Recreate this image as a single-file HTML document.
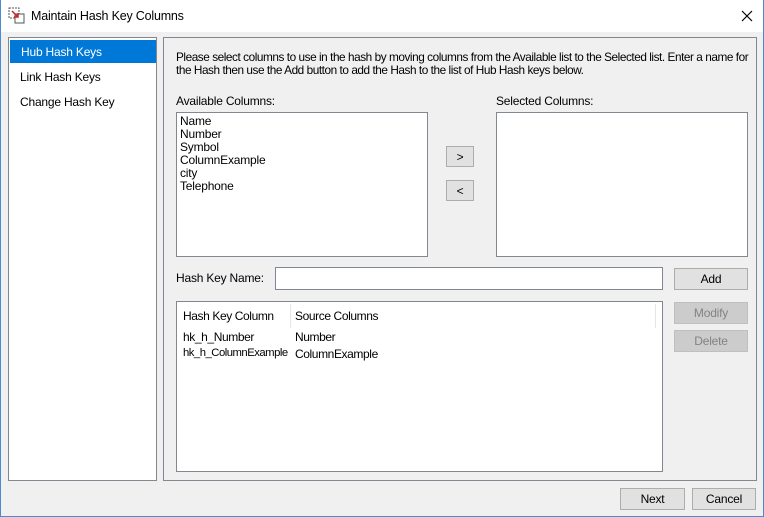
<!DOCTYPE html>
<html><head><style>
*{margin:0;padding:0;box-sizing:border-box}
body{width:764px;height:517px;background:#f0f0f0;font-family:"Liberation Sans",sans-serif;font-size:12px;letter-spacing:-0.2px;color:#000;position:relative;overflow:hidden}
.a{position:absolute}
.title{left:0;top:0;width:764px;height:32px;background:#fff}
.box{background:#fff;border:1px solid #828790}
.btn{background:#e1e1e1;border:1px solid #adadad;text-align:center;line-height:20px}
.dis{background:#cccccc;border:1px solid #bfbfbf;color:#838383}
</style></head><body>
<div class="a title">
<svg class="a" style="left:8px;top:7px" width="18" height="18" viewBox="0 0 18 18"><rect x="1" y="1" width="10" height="10" fill="none" stroke="#555" stroke-dasharray="2 1"/><rect x="7" y="7" width="9" height="9" fill="#fff" stroke="#555"/><path d="M4 4 L10 10 M10 6 L10 10 L6 10" stroke="#d02020" stroke-width="1.5" fill="none"/></svg>
<div class="a" style="left:31px;top:9px;font-size:12.5px">Maintain Hash Key Columns</div>
<svg class="a" style="left:741px;top:10px" width="12" height="12"><path d="M1 1L11 11M11 1L1 11" stroke="#000" stroke-width="1.2"/></svg>
</div>
<div class="a box" style="left:8px;top:37px;width:149px;height:444px">
<div class="a" style="left:1px;top:2px;width:146px;height:23px;background:#0078d7;color:#fff;padding:5px 0 0 11px">Hub Hash Keys</div>
<div class="a" style="left:11px;top:32px">Link Hash Keys</div>
<div class="a" style="left:11px;top:57px">Change Hash Key</div>
</div>
<div class="a" style="left:163px;top:37px;width:594px;height:444px;border:1px solid #828790;background:#f0f0f0"></div>
<div class="a" style="left:176px;top:51px;width:585px;line-height:13px;font-size:11.8px;letter-spacing:-0.45px">Please select columns to use in the hash by moving columns from the Available list to the Selected list. Enter a name for<br>the Hash then use the Add button to add the Hash to the list of Hub Hash keys below.</div>
<div class="a" style="left:176px;top:94px">Available Columns:</div>
<div class="a" style="left:496px;top:94px">Selected Columns:</div>
<div class="a box" style="left:176px;top:112px;width:252px;height:145px;padding:2px 0 0 3px;line-height:13px">Name<br>Number<br>Symbol<br>ColumnExample<br>city<br>Telephone</div>
<div class="a box" style="left:496px;top:112px;width:252px;height:145px"></div>
<div class="a btn" style="left:446px;top:146px;width:28px;height:21px">&gt;</div>
<div class="a btn" style="left:446px;top:180px;width:28px;height:21px">&lt;</div>
<div class="a" style="left:176px;top:271px">Hash Key Name:</div>
<div class="a box" style="left:275px;top:267px;width:388px;height:23px"></div>
<div class="a btn" style="left:674px;top:268px;width:74px;height:22px">Add</div>
<div class="a box" style="left:176px;top:301px;width:487px;height:171px;letter-spacing:-0.4px">
<div class="a" style="left:6px;top:7px">Hash Key Column</div>
<div class="a" style="left:113px;top:2px;width:1px;height:24px;background:#e5e5e5"></div>
<div class="a" style="left:118px;top:7px">Source Columns</div>
<div class="a" style="left:478px;top:2px;width:1px;height:24px;background:#e5e5e5"></div>
<div class="a" style="left:6px;top:28px">hk_h_Number</div>
<div class="a" style="left:118px;top:28px">Number</div>
<div class="a" style="left:6px;top:45px;font-size:11.3px;letter-spacing:-0.5px">hk_h_ColumnExample</div>
<div class="a" style="left:118px;top:45px">ColumnExample</div>
</div>
<div class="a btn dis" style="left:674px;top:302px;width:74px;height:22px">Modify</div>
<div class="a btn dis" style="left:674px;top:330px;width:74px;height:22px">Delete</div>
<div class="a btn" style="left:620px;top:488px;width:65px;height:22px">Next</div>
<div class="a btn" style="left:692px;top:488px;width:64px;height:22px">Cancel</div>
<div class="a" style="left:763px;top:0;width:1px;height:517px;background:#4a8ad0"></div>
<div class="a" style="left:0;top:516px;width:764px;height:1px;background:#4a8ad0"></div>
<div class="a" style="left:0;top:0;width:1px;height:517px;background:#4a8ad0"></div>
</body></html>
